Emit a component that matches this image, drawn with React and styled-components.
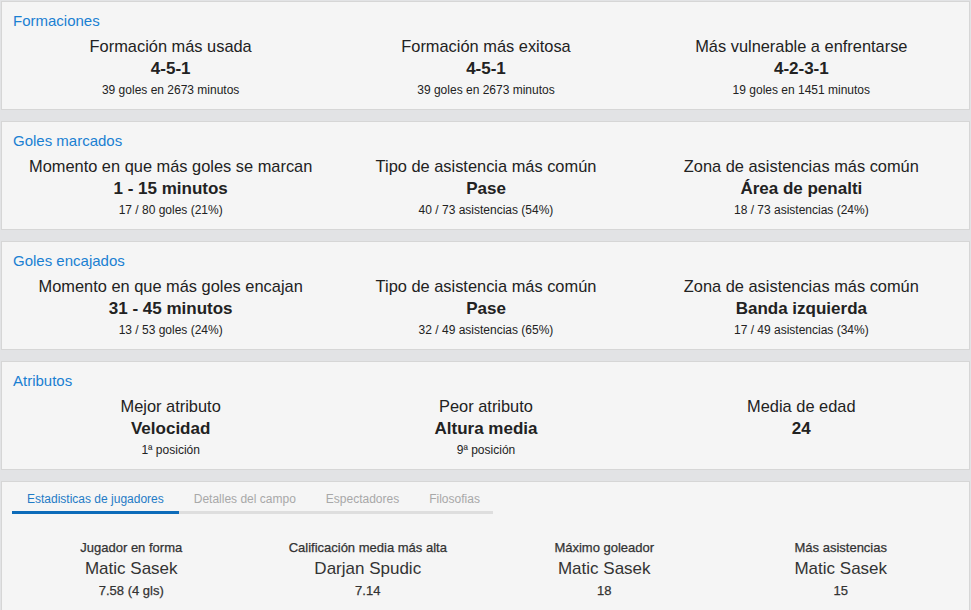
import React from 'react'
import styled, { createGlobalStyle } from 'styled-components'

const GlobalStyle = createGlobalStyle`
  html, body {
    margin: 0;
    padding: 0;
    background: #e2e3e5;
    font-family: "Liberation Sans", Arial, sans-serif;
    color: #222;
  }
`

const Page = styled.div`
  padding: 1px 1px 0 1px;
  display: flex;
  flex-direction: column;
  gap: 11px;
`

const Panel = styled.section`
  background: #f5f5f5;
  border: 1px solid #d6d6d6;
  padding: ${p => p.$padTop || 9}px 10px 10px 10px;
  height: ${p => p.$height || 'auto'};
  box-sizing: border-box;
`

const Title = styled.h2`
  margin: 0 0 0 1px;
  font-size: 15px;
  line-height: 20px;
  font-weight: normal;
  color: #1a80d2;
`

const Grid = styled.div`
  display: grid;
  grid-template-columns: repeat(${p => p.$cols}, 1fr);
  margin-top: ${p => p.$top || 0}px;
  padding-left: 1px;
`

const Cell = styled.div`
  text-align: center;
`

const Label = styled.div`
  font-size: 16.4px;
  line-height: 22px;
  color: #222;
`

const Value = styled.div`
  padding-top: 1px;
  font-size: 17px;
  line-height: 22px;
  font-weight: bold;
  color: #222;
`

const Note = styled.div`
  font-size: 12px;
  line-height: 20px;
  color: #222;
`

const Tabs = styled.div`
  display: flex;
  width: 481px;
  border-bottom: 3px solid #dedede;
`

const Tab = styled.div`
  padding: 0 15px 2px 15px;
  font-size: 12px;
  line-height: 20px;
  color: ${p => (p.$active ? '#1f7bc6' : '#a8a8a8')};
  border-bottom: 3px solid ${p => (p.$active ? '#0d6bb9' : 'transparent')};
  margin-bottom: -3px;
  white-space: nowrap;
`

const StatLabel = styled.div`
  font-size: 13px;
  line-height: 18px;
  color: #333;
  -webkit-text-stroke: 0.25px #333;
`

const StatName = styled.div`
  font-size: 17px;
  line-height: 24px;
  color: #333;
`

const StatValue = styled.div`
  font-size: 13px;
  line-height: 20px;
  color: #333;
  -webkit-text-stroke: 0.25px #333;
`

const sections = [
  {
    title: 'Formaciones',
    items: [
      ['Formación más usada', '4-5-1', '39 goles en 2673 minutos'],
      ['Formación más exitosa', '4-5-1', '39 goles en 2673 minutos'],
      ['Más vulnerable a enfrentarse', '4-2-3-1', '19 goles en 1451 minutos'],
    ],
  },
  {
    title: 'Goles marcados',
    items: [
      ['Momento en que más goles se marcan', '1 - 15 minutos', '17 / 80 goles (21%)'],
      ['Tipo de asistencia más común', 'Pase', '40 / 73 asistencias (54%)'],
      ['Zona de asistencias más común', 'Área de penalti', '18 / 73 asistencias (24%)'],
    ],
  },
  {
    title: 'Goles encajados',
    items: [
      ['Momento en que más goles encajan', '31 - 45 minutos', '13 / 53 goles (24%)'],
      ['Tipo de asistencia más común', 'Pase', '32 / 49 asistencias (65%)'],
      ['Zona de asistencias más común', 'Banda izquierda', '17 / 49 asistencias (34%)'],
    ],
  },
  {
    title: 'Atributos',
    items: [
      ['Mejor atributo', 'Velocidad', '1ª posición'],
      ['Peor atributo', 'Altura media', '9ª posición'],
      ['Media de edad', '24', ''],
    ],
  },
]

const tabs = ['Estadisticas de jugadores', 'Detalles del campo', 'Espectadores', 'Filosofias']

const players = [
  ['Jugador en forma', 'Matic Sasek', '7.58 (4 gls)'],
  ['Calificación media más alta', 'Darjan Spudic', '7.14'],
  ['Máximo goleador', 'Matic Sasek', '18'],
  ['Más asistencias', 'Matic Sasek', '15'],
]

export default function App() {
  return (
    <>
      <GlobalStyle />
      <Page>
        {sections.map(s => (
          <Panel key={s.title} $height="109px">
            <Title>{s.title}</Title>
            <Grid $cols={3} $top={4}>
              {s.items.map(([label, value, note], i) => (
                <Cell key={i}>
                  <Label>{label}</Label>
                  <Value>{value}</Value>
                  {note && <Note>{note}</Note>}
                </Cell>
              ))}
            </Grid>
          </Panel>
        ))}
        <Panel $height="140px" $padTop={7}>
          <Tabs>
            {tabs.map((t, i) => (
              <Tab key={t} $active={i === 0}>{t}</Tab>
            ))}
          </Tabs>
          <Grid $cols={4} $top={25}>
            {players.map(([label, name, value]) => (
              <Cell key={label}>
                <StatLabel>{label}</StatLabel>
                <StatName>{name}</StatName>
                <StatValue>{value}</StatValue>
              </Cell>
            ))}
          </Grid>
        </Panel>
      </Page>
    </>
  )
}
